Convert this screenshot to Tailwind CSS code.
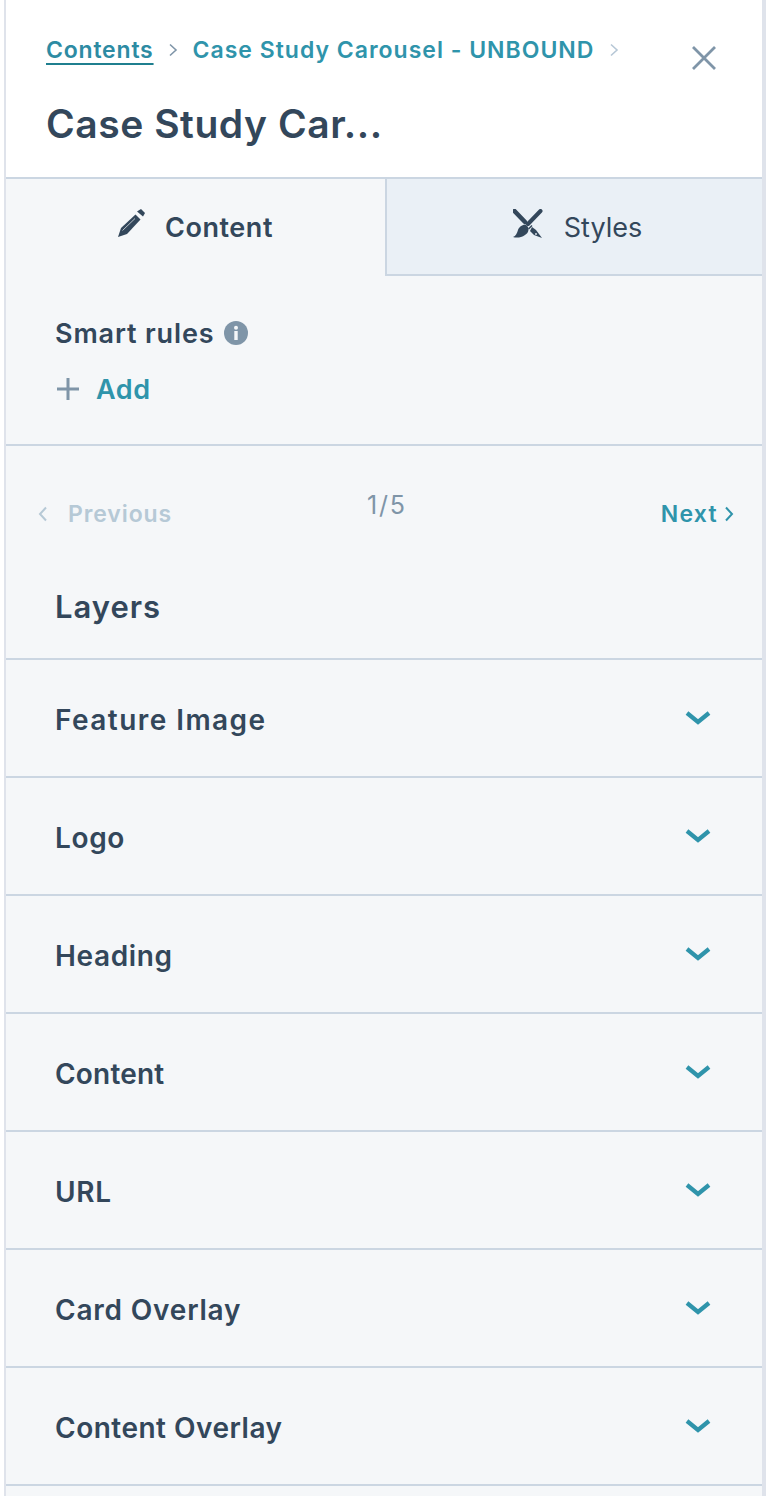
<!DOCTYPE html>
<html lang="en">
<head>
    <meta charset="UTF-8">
    <meta name="viewport" content="width=device-width, initial-scale=1.0">
    <title>Case Study Carousel</title>
    <script src="https://cdn.jsdelivr.net/npm/@tailwindcss/browser@4"></script>
</head>
<body class="h-[1496px] overflow-hidden bg-[#f5f7f9] font-['Inter',sans-serif] text-[#33475b]">
<div class="flex h-[1496px] w-[766px] overflow-hidden">
<!-- left edge -->
<div class="w-[6px] shrink-0 border-r-2 border-[#dfe3eb] bg-white"></div>
<main class="w-[756px] shrink-0">
    <!-- Header -->
    <header class="relative h-[179px] border-b-2 border-[#cbd6e2] bg-white pl-[40px]">
        <div class="flex h-[100px] items-center">
            <a class="text-[23px] leading-none font-semibold tracking-[0.8px] text-[#2d8ba3] underline decoration-2 decoration-[#1f7f8f] underline-offset-[5px]">Contents</a>
            <svg class="ml-[14px] h-[14px] w-[10px]" viewBox="0 0 10 14" fill="none" stroke="#7f95a8" stroke-width="1.6"><path d="M2 1.500l6 5.500-6 5.500"/></svg>
            <span class="ml-[15px] text-[23px] leading-none font-semibold tracking-[1px] text-[#2f94ab]">Case Study Carousel - UNBOUND</span>
            <svg class="ml-[15px] h-[14px] w-[10px]" viewBox="0 0 10 14" fill="none" stroke="#b6c7d6" stroke-width="1.6"><path d="M2 1.500l6 5.500-6 5.500"/></svg>
        </div>
        <h1 class="-mt-[1px] text-[39px] leading-[50px] font-semibold tracking-[0.55px]">Case Study Car...</h1>
        <button class="absolute top-[45px] left-[685px] h-[26px] w-[26px]">
            <svg viewBox="0 0 26 26" class="h-[26px] w-[26px]" fill="none" stroke="#7f95a8" stroke-width="2.800"><path d="M2 2l22 22M24 2L2 24"/></svg>
        </button>
    </header>

    <!-- Tabs -->
    <div class="flex h-[97px]">
        <div class="flex w-[381px] items-center justify-center gap-[19px] border-r-2 border-[#cbd6e2] pr-[2px] pb-[1px]">
            <svg class="-mt-[8px] h-[30px] w-[30px]" viewBox="16 13 30 30" fill="#33475b">
                <path d="M18 42l3-9 14.500-13.500 5 5L27 39z"/>
                <path d="M37 16.500l4-2.500 4 4-2 3.500z"/>
                <path d="M22.500 35.500L35 23.500" stroke="#f5f7f9" stroke-width="1" opacity=".7"/>
            </svg>
            <span class="text-[27px] leading-none font-semibold tracking-[0.55px]">Content</span>
        </div>
        <div class="flex flex-1 items-center justify-center gap-[21px] border-b-2 border-[#cbd6e2] bg-[#eaf0f6] pl-[6px]">
            <svg class="-mt-[6px] h-[30px] w-[30px]" viewBox="14 13 30 30" fill="#33475b">
                <path d="M15.500 15L26 26" stroke="#33475b" stroke-width="4.500" stroke-linecap="round"/>
                <path d="M41.500 15L29 28" stroke="#33475b" stroke-width="4" stroke-linecap="round"/>
                <path d="M27 29c4 2 3 8-1 10-4 3-9 3-12 2 3-1 4-4 5-7 1-3 5-6 8-5z"/>
                <path d="M33 31l4 3 6 8-8-3-4-4z"/>
                <path d="M29.500 33L33 29.500" stroke="#33475b" stroke-width="1.500"/>
                <circle cx="37" cy="38" r="0.900" fill="#eaf0f6"/>
            </svg>
            <span class="pt-[1px] text-[27px] leading-none font-normal tracking-[0px]">Styles</span>
        </div>
    </div>

    <!-- Smart rules -->
    <section class="h-[170px] border-b-2 border-[#cbd6e2] pt-[42px] pl-[49px]">
        <div class="flex h-[30px] items-center gap-[10px]">
            <span class="text-[27px] leading-none font-semibold tracking-[0.85px]">Smart rules</span>
            <svg class="h-[24px] w-[24px]" viewBox="0 0 24 24">
                <circle cx="12" cy="12" r="12" fill="#7f95a8"/>
                <rect x="10.300" y="10" width="3.400" height="9" fill="#f5f7f9"/>
                <circle cx="12" cy="6.800" r="2" fill="#f5f7f9"/>
            </svg>
        </div>
        <div class="mt-[26px] flex h-[30px] items-center gap-[16px]">
            <svg class="ml-[1px] h-[24px] w-[24px]" viewBox="0 0 24 24" stroke="#7f95a8" stroke-width="3"><path d="M12 1v22M1 12h22"/></svg>
            <span class="text-[27px] leading-none font-semibold tracking-[0.6px] text-[#2f94ab]">Add</span>
        </div>
    </section>

    <!-- Pager -->
    <div class="relative flex h-[115px] items-start justify-between pt-[53px] pr-[28px] pl-[32px]">
        <div class="flex h-[30px] items-center gap-[20px] text-[#b6c9d6]">
            <svg class="h-[16px] w-[10px]" viewBox="0 0 10 16" fill="none" stroke="currentColor" stroke-width="2"><path d="M8 1.500L2 8l6 6.500"/></svg>
            <span class="text-[23px] leading-none font-semibold tracking-[0.9px]">Previous</span>
        </div>
        <span class="absolute top-[44px] left-[361px] text-[25px] leading-[30px] tracking-[1.8px] text-[#7f95a8]">1/5</span>
        <div class="flex h-[30px] items-center gap-[6px] text-[#2f94ab]">
            <span class="text-[23px] leading-none font-semibold tracking-[1.3px]">Next</span>
            <svg class="h-[16px] w-[10px]" viewBox="0 0 10 16" fill="none" stroke="currentColor" stroke-width="2"><path d="M2 1.500L8 8l-6 6.500"/></svg>
        </div>
    </div>

    <!-- Layers -->
    <div class="h-[99px] border-b-2 border-[#cbd6e2] pt-[27px] pl-[49px]">
        <h2 class="text-[31px] leading-[38px] font-semibold tracking-[1px]">Layers</h2>
    </div>
    <ul>
        <li class="flex h-[118px] items-center justify-between border-b-2 border-[#cbd6e2] pr-[51px] pl-[49px]"><span class="pt-[3px] text-[28px] leading-none font-semibold tracking-[1.45px]">Feature Image</span><svg class="h-[16px] w-[26px]" viewBox="0 0 26 16" fill="none" stroke="#2f94ab" stroke-width="4.200"><path d="M2 3l11 9 11-9"/></svg></li>
        <li class="flex h-[118px] items-center justify-between border-b-2 border-[#cbd6e2] pr-[51px] pl-[49px]"><span class="pt-[3px] text-[28px] leading-none font-semibold tracking-[0.65px]">Logo</span><svg class="h-[16px] w-[26px]" viewBox="0 0 26 16" fill="none" stroke="#2f94ab" stroke-width="4.200"><path d="M2 3l11 9 11-9"/></svg></li>
        <li class="flex h-[118px] items-center justify-between border-b-2 border-[#cbd6e2] pr-[51px] pl-[49px]"><span class="pt-[3px] text-[28px] leading-none font-semibold tracking-[0.65px]">Heading</span><svg class="h-[16px] w-[26px]" viewBox="0 0 26 16" fill="none" stroke="#2f94ab" stroke-width="4.200"><path d="M2 3l11 9 11-9"/></svg></li>
        <li class="flex h-[118px] items-center justify-between border-b-2 border-[#cbd6e2] pr-[51px] pl-[49px]"><span class="pt-[3px] text-[28px] leading-none font-semibold tracking-[0.2px]">Content</span><svg class="h-[16px] w-[26px]" viewBox="0 0 26 16" fill="none" stroke="#2f94ab" stroke-width="4.200"><path d="M2 3l11 9 11-9"/></svg></li>
        <li class="flex h-[118px] items-center justify-between border-b-2 border-[#cbd6e2] pr-[51px] pl-[49px]"><span class="pt-[3px] text-[28px] leading-none font-semibold tracking-[0.65px]">URL</span><svg class="h-[16px] w-[26px]" viewBox="0 0 26 16" fill="none" stroke="#2f94ab" stroke-width="4.200"><path d="M2 3l11 9 11-9"/></svg></li>
        <li class="flex h-[118px] items-center justify-between border-b-2 border-[#cbd6e2] pr-[51px] pl-[49px]"><span class="pt-[3px] text-[28px] leading-none font-semibold tracking-[0.8px]">Card Overlay</span><svg class="h-[16px] w-[26px]" viewBox="0 0 26 16" fill="none" stroke="#2f94ab" stroke-width="4.200"><path d="M2 3l11 9 11-9"/></svg></li>
        <li class="flex h-[118px] items-center justify-between border-b-2 border-[#cbd6e2] pr-[51px] pl-[49px]"><span class="pt-[3px] text-[28px] leading-none font-semibold tracking-[0.5px]">Content Overlay</span><svg class="h-[16px] w-[26px]" viewBox="0 0 26 16" fill="none" stroke="#2f94ab" stroke-width="4.200"><path d="M2 3l11 9 11-9"/></svg></li>
    </ul>
</main>
<!-- right edge -->
<div class="w-[4px] shrink-0 bg-[#dfe3eb]"></div>
</div>
</body>
</html>
